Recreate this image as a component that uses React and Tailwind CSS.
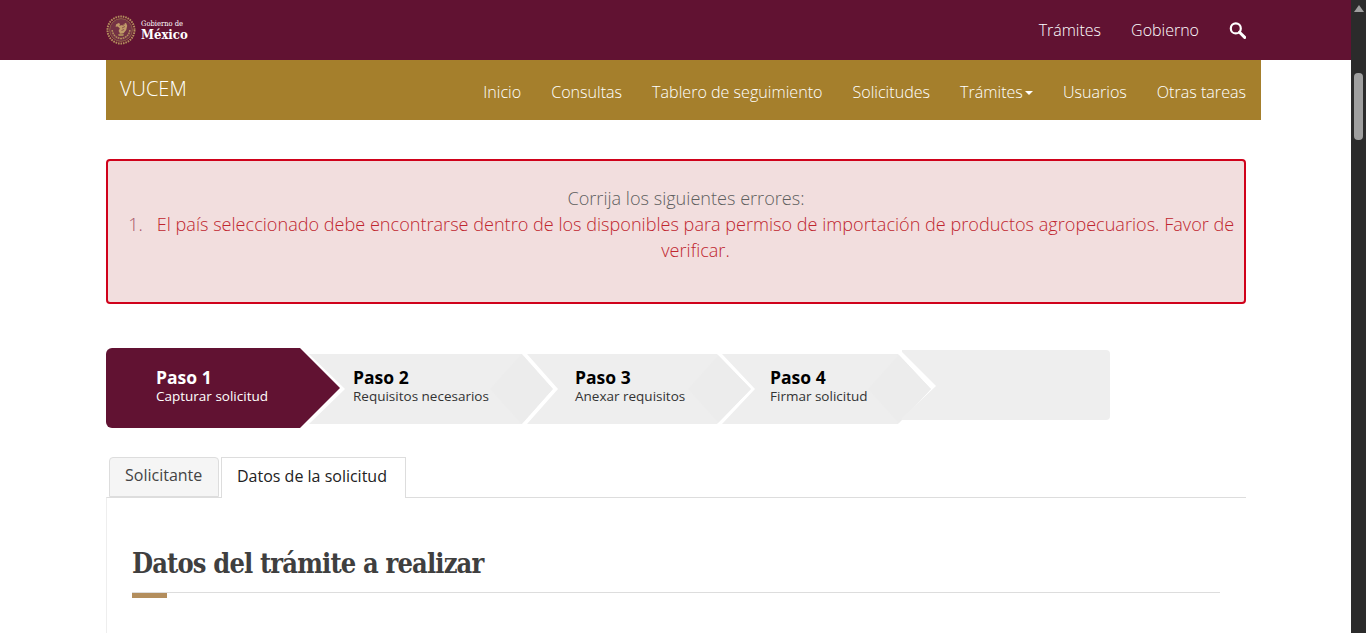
const navItems = ['Inicio', 'Consultas', 'Tablero de seguimiento', 'Solicitudes', 'Trámites', 'Usuarios', 'Otras tareas'];

const Emblem = () => (
  <svg width="30" height="30" viewBox="0 0 30 30" fill="none" className="shrink-0">
    <circle cx="15" cy="15" r="13.5" stroke="#b38e5d" strokeWidth="2" strokeDasharray="1.6 0.9" />
    <circle cx="15" cy="15" r="11.4" fill="#743244" stroke="#96704a" strokeWidth="0.8" />
    {/* eagle */}
    <path d="M10 9.5l2.6-1.6 1.6 1.2-1 1.6 3.4-.6 3.4-2.4 1.2 3-1 4.4-2.6 3.2-3.4.4-1.6-2.6 1.2-2.8-2.2-1.8-2 .2z" fill="#c09a68" />
    <path d="M16.5 10.5l2-1M16 13l3-1.5M15.5 15.5l2.6-1" stroke="#743244" strokeWidth="0.7" />
    {/* cactus and wreath */}
    <path d="M12 19.5c1.5-1.2 4.5-1.2 6 0l-.8 1.6h-4.4z" fill="#a88558" />
    <path d="M6.2 15c.4 4.6 3.6 8 8.8 8.6 5.2-.6 8.4-4 8.8-8.6" stroke="#b38e5d" strokeWidth="1.5" strokeDasharray="1.8 0.7" />
  </svg>
);

const Step = ({ title, subtitle, className, clip, active }) => (
  <div className={`relative shrink-0 ${className}`}>
    <div className={`flex h-full flex-col justify-center ${active ? 'pb-[3px]' : 'pb-[5px]'} ${clip}`}>
      {!active && <div className="absolute right-0 top-0 h-full w-[63px] bg-[#ececec] [clip-path:polygon(0_50%,50%_0,100%_50%,50%_100%)]"></div>}
      <p className={`relative text-[17.5px] font-bold leading-[19px] ${active ? 'text-white' : 'text-black'}`}>{title}</p>
      <p className={`relative text-[13.5px] leading-[19px] ${active ? 'text-white' : 'text-[#333]'}`}>{subtitle}</p>
    </div>
  </div>
);

export default function App() {
  return (
    <div className="flex h-screen overflow-hidden bg-white font-['Open_Sans',sans-serif]">
      <div className="min-w-0 flex-1">
        <header className="h-[60px] bg-[#611232]">
          <div className="ml-[106px] mr-[105px] flex h-full items-center justify-between">
            <div className="flex items-center gap-[5px]">
              <Emblem />
              <div className="font-['DejaVu_Serif_Condensed','DejaVu_Serif',serif] text-white">
                <p className="text-[7.5px] leading-[8px]">Gobierno de</p>
                <p className="text-[13px] font-bold leading-[13px]">México</p>
              </div>
            </div>
            <nav className="flex items-center gap-[30px] text-[16px] font-light text-white">
              <span>Trámites</span>
              <span>Gobierno</span>
              <svg width="17" height="17" viewBox="0 0 17 17" fill="none" stroke="white" strokeWidth="2.2">
                <circle cx="6.8" cy="6.4" r="5" />
                <path d="M10.5 10.2l5.2 5.2" strokeWidth="3" strokeLinecap="round" />
              </svg>
            </nav>
          </div>
        </header>

        <div className="ml-[106px] mr-[90px]">
          <div className="flex h-[60px] justify-between bg-[#a57f2c] pl-[14px] pr-[15px] text-white">
            <span className="pt-[15px] text-[20px] font-light leading-[27px]">VUCEM</span>
            <nav className="flex items-start gap-[30px] pt-[21px] text-[16.1px] font-light leading-[22px]">
              {navItems.map((item) => (
                <span key={item} className="flex items-center">
                  {item}
                  {item === 'Trámites' && <span className="ml-[2px] mt-[2px] border-x-[4px] border-t-[4px] border-x-transparent border-t-white"></span>}
                </span>
              ))}
            </nav>
          </div>

          <div className="mr-[15px]">
            <div className="mt-[39px] h-[145px] rounded border-2 border-[#d0021b] bg-[#f2dede] pl-[20px] pr-[5px] pt-[24px] text-center text-[18.1px] font-light leading-[26px]">
              <p className="pl-[5px] text-[#5f5f5f]">Corrija los siguientes errores:</p>
              <div className="flex gap-[9px] text-[#c0262f]">
                <span className="w-[15px] text-[#a8566b]">1.</span>
                <p className="flex-1">El país seleccionado debe encontrarse dentro de los disponibles para permiso de importación de productos agropecuarios. Favor de verificar.</p>
              </div>
            </div>

            <div className="mt-[44px] flex h-[80px] items-start">
              <Step
                active
                title="Paso 1"
                subtitle="Capturar solicitud"
                className="h-[80px] w-[234px]"
                clip="rounded-l-md bg-[#611232] pl-[50px] [clip-path:polygon(0_0,194px_0,234px_50%,194px_100%,0_100%)]"
              />
              <Step
                title="Paso 2"
                subtitle="Requisitos necesarios"
                className="-ml-[31px] mt-[6px] h-[70px] w-[244px]"
                clip="bg-[#eeeeee] pl-[44px] [clip-path:polygon(0_0,213px_0,244px_50%,213px_100%,0_100%,36px_50%)]"
              />
              <Step
                title="Paso 3"
                subtitle="Anexar requisitos"
                className="-ml-[26px] mt-[6px] h-[70px] w-[224px]"
                clip="bg-[#eeeeee] pl-[48px] [clip-path:polygon(0_0,190px_0,224px_50%,190px_100%,0_100%,31px_50%)]"
              />
              <Step
                title="Paso 4"
                subtitle="Firmar solicitud"
                className="-ml-[29px] mt-[6px] h-[70px] w-[209px]"
                clip="bg-[#eeeeee] pl-[48px] [clip-path:polygon(0_0,176px_0,209px_50%,176px_100%,0_100%,33px_50%)]"
              />
              <div className="-ml-[29px] mt-[2px] h-[70px] w-[208px] rounded-r bg-[#eeeeee] [clip-path:polygon(0_0,100%_0,100%_100%,0_100%,0_68px,34px_36px,0_2px)]"></div>
            </div>

            <div className="mt-[28px] flex h-[41px] items-end gap-[2px] pl-[3px] text-[16px]">
              <div className="flex h-[40px] w-[110px] items-center rounded-t border border-[#ddd] bg-[#f5f5f5] pb-[4px] pl-[15px] text-[#444]">Solicitante</div>
              <div className="relative z-10 -mb-px flex h-[41px] w-[185px] items-center border border-b-0 border-[#ddd] bg-white pb-[4px] pl-[15px] text-[#222]">Datos de la solicitud</div>
            </div>
            <div className="h-[200px] border-l border-t border-l-[#eee] border-t-[#ddd] pl-[25px] pr-[26px] pt-[48px]">
              <h2 className="font-['DejaVu_Serif_Condensed','DejaVu_Serif',serif] text-[27px] font-bold leading-[36px] tracking-[-0.85px] text-[#3f3f3f]">Datos del trámite a realizar</h2>
              <div className="mt-[10px] border-t border-[#ddd]">
                <div className="h-[5px] w-[35px] bg-[#b38e5d]"></div>
              </div>
            </div>
          </div>
        </div>
      </div>

      <div className="flex w-[15px] shrink-0 flex-col items-center bg-[#2b2b2b] pt-[5px]">
        <span className="border-x-[5px] border-b-[7px] border-x-transparent border-b-[#9f9f9f]"></span>
        <div className="mt-[61px] h-[67px] w-[9px] rounded-[4px] bg-[#9f9f9f]"></div>
      </div>
    </div>
  );
}
